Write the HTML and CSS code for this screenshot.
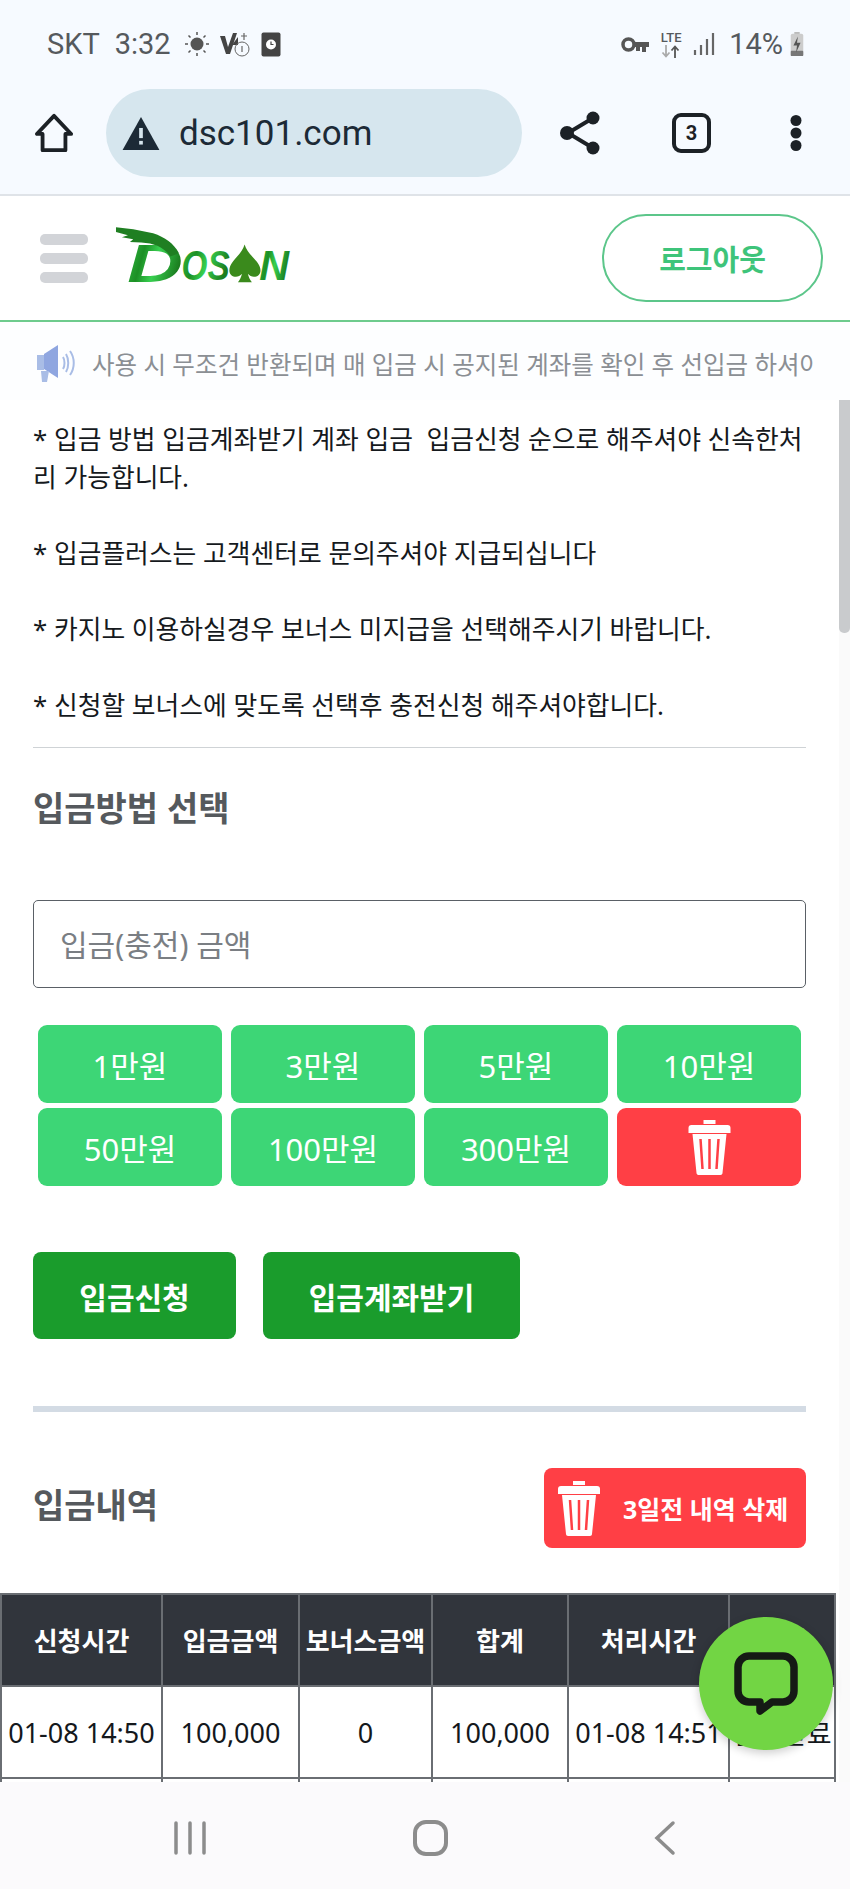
FILE: index.html
```html
<!DOCTYPE html>
<html lang="ko">
<head>
    <meta charset="UTF-8">
    <meta name="viewport" content="width=device-width, initial-scale=1.0">
    <title>dsc101.com</title>
    <link rel="stylesheet" href="styles.css">
</head>
<body>
    <div class="phone">
        <div class="statusbar">
            <div class="status-left">
                <span>SKT</span>
                <span>3:32</span>
                <svg class="sun" width="24" height="24" viewBox="0 0 24 24"><circle cx="12" cy="12" r="6.500" fill="#555"/><g stroke="#555" stroke-width="1.500"><path d="M12 0v3M12 21v3M0 12h3M21 12h3M3.500 3.500l2 2M18.500 18.500l2 2M3.500 20.500l2-2M18.500 5.500l2-2"/></g></svg>
                <svg width="30" height="26" viewBox="0 0 30 26"><path d="M0 5h5l3 11L13 2h4l-7 21H6z" fill="#444"/><path d="M12 14l6-8v8z" fill="#444"/><circle cx="22" cy="18" r="7" fill="none" stroke="#666" stroke-width="1"/><path d="M22 15v6M24 2v7M21 5h6" stroke="#666" stroke-width="1.200"/></svg>
                <svg width="20" height="25" viewBox="0 0 20 25"><rect x="0.500" y="0.500" width="19" height="24" rx="2" fill="#444"/><circle cx="10" cy="12.500" r="5" fill="#fff"/><path d="M10 9.500v3h2.500" fill="none" stroke="#444" stroke-width="1.200"/></svg>
            </div>
            <div class="status-right">
                <svg width="28" height="17" viewBox="0 0 28 17"><circle cx="7.500" cy="8.500" r="5.500" fill="none" stroke="#555" stroke-width="3.500"/><path d="M12 6h16v5h-3v5h-4v-5h-2v4h-4v-4h-3z" fill="#555"/></svg>
                <div class="lte"><span>LTE</span><svg width="22" height="13" viewBox="0 0 22 13"><path d="M6 0v11M2.500 7.500L6 11.500l3.500-4" fill="none" stroke="#aaa" stroke-width="1.800"/><path d="M15 13V2M11.500 5.500L15 1.500l3.500 4" fill="none" stroke="#555" stroke-width="1.800"/></svg></div>
                <svg width="22" height="24" viewBox="0 0 22 24"><path d="M2 18v5M8 13v10M14 7v16M20 1v22" stroke="#666" stroke-width="2.200"/></svg>
                <span class="percent">14%</span>
                <svg class="battery" width="16" height="25" viewBox="0 0 16 28"><rect x="5" y="0" width="6" height="3" fill="#bbb"/><rect x="1" y="2" width="14" height="25" rx="2" fill="#ccc"/><rect x="1" y="21" width="14" height="6" rx="1" fill="#777"/><path d="M9 5l-5 10h4l-1 8 5-11H8z" fill="#555"/></svg>
            </div>
        </div>

        <div class="toolbar">
            <svg width="40" height="40" viewBox="0 0 42 42"><path d="M21 3L3 22h6v17h24V22h6z" fill="none" stroke="#1c2126" stroke-width="4" stroke-linejoin="round"/></svg>
            <div class="urlbar">
                <svg width="40" height="35" viewBox="0 0 40 38"><path d="M20 1L40 37H0z" fill="#1c2a36"/><rect x="18" y="13" width="4" height="11" fill="#d6e6ee"/><rect x="18" y="27" width="4" height="4" fill="#d6e6ee"/></svg>
                <span>dsc101.com</span>
            </div>
            <svg class="share-icon" width="40" height="44" viewBox="0 0 40 44"><path d="M33 7L8 22l25 15" fill="none" stroke="#1c2126" stroke-width="4"/><circle cx="33" cy="7" r="6.500" fill="#1c2126"/><circle cx="7" cy="22" r="7" fill="#1c2126"/><circle cx="33" cy="37" r="6.500" fill="#1c2126"/></svg>
            <div class="tabcount">3</div>
            <svg class="more-icon" width="12" height="36" viewBox="0 0 12 36"><circle cx="6" cy="5.500" r="5.500" fill="#1c2126"/><circle cx="6" cy="18" r="5.500" fill="#1c2126"/><circle cx="6" cy="30.500" r="5.500" fill="#1c2126"/></svg>
        </div>

        <header class="site-header">
            <div class="hamburger"><i></i><i></i><i></i></div>
            <div class="logo">
                <svg class="logo-art" width="177" height="58" viewBox="280 44 530 175">
                    <defs>
                        <linearGradient id="logoGreen" x1="0" y1="0" x2="1" y2="0.300">
                            <stop offset="0" stop-color="#35c445"/>
                            <stop offset="0.35" stop-color="#1c8f25"/>
                            <stop offset="0.6" stop-color="#38d050"/>
                            <stop offset="1" stop-color="#1b7d1f"/>
                        </linearGradient>
                    </defs>
                    <text class="logo-letter" x="318" y="213" font-size="160" textLength="168" lengthAdjust="spacingAndGlyphs" fill="url(#logoGreen)">D</text>
                    <path d="M284 48l52 6 60 12c36 12 62 30 78 60l-26 10c-18-28-50-40-88-42l-34-2 10-8-34-6 18-6-36-10z" fill="#1f7f22"/>
                    <text class="logo-letter" x="482" y="206" font-size="130" textLength="145" lengthAdjust="spacingAndGlyphs" fill="url(#logoGreen)">OS</text>
                    <path d="M672 100c10 34 48 50 48 78 0 20-26 26-38 10 2 10 6 18 12 26h-42c6-8 10-16 12-26-12 16-38 10-38-10 0-28 36-44 46-78z" fill="#3a8a1c"/>
                    <text class="logo-letter" x="716" y="206" font-size="130" textLength="90" lengthAdjust="spacingAndGlyphs" fill="url(#logoGreen)">N</text>
                </svg>
            </div>
            <button class="logout-btn">로그아웃</button>
        </header>

        <div class="notice">
            <svg width="42" height="39" viewBox="0 0 42 39"><path d="M0 11h7v15H0z" fill="#a9bde6"/><path d="M7 10l14-9v33L7 25z" fill="#8fa6e0"/><path d="M4 27h8l-2 11H5z" fill="#a9bde6"/><path d="M26 13c2 3 2 9 0 12M33 7c5 7 5 17 0 24M29 10c3 5 3 13 0 18" fill="none" stroke="#a9bde6" stroke-width="2"/></svg>
            <div class="notice-text"><span>사용 시 무조건 반환되며 매 입금 시 공지된 계좌를 확인 후 선입금 하셔야 합니다</span></div>
        </div>

        <main class="content">
            <div class="guide">
                <p>* 입금 방법 입금계좌받기 계좌 입금&nbsp; 입금신청 순으로 해주셔야 신속한처리 가능합니다.</p>
                <p>* 입금플러스는 고객센터로 문의주셔야 지급되십니다</p>
                <p>* 카지노 이용하실경우 보너스 미지급을 선택해주시기 바랍니다.</p>
                <p>* 신청할 보너스에 맞도록 선택후 충전신청 해주셔야합니다.</p>
            </div>

            <h2 class="section-title">입금방법 선택</h2>

            <input class="amount-input" type="text" placeholder="입금(충전) 금액">

            <div class="amount-grid">
                <button class="amount-btn">1만원</button>
                <button class="amount-btn">3만원</button>
                <button class="amount-btn">5만원</button>
                <button class="amount-btn">10만원</button>
                <button class="amount-btn">50만원</button>
                <button class="amount-btn">100만원</button>
                <button class="amount-btn">300만원</button>
                <button class="amount-btn clear-btn">
                    <svg width="45" height="56" viewBox="0 0 44 56"><path d="M16 1h12v4H16z" fill="#fff"/><path d="M4 6h36c2 0 3 1 3 3v5H1V9c0-2 1-3 3-3z" fill="#fff"/><path d="M5 15h34l-4 39c0 1-1 2-2 2H11c-1 0-2-1-2-2z" fill="#fff"/><path d="M13 20l2 30M22 20v30M31 20l-2 30" stroke="#ff3f45" stroke-width="2.500"/></svg>
                </button>
            </div>

            <div class="action-row">
                <button class="action-btn">입금신청</button>
                <button class="action-btn account-btn">입금계좌받기</button>
            </div>

            <div class="thick-line"></div>

            <div class="history-head">
                <h2 class="history-title">입금내역</h2>
                <button class="delete-old-btn">
                    <svg width="44" height="56" viewBox="0 0 44 56"><path d="M16 1h12v4H16z" fill="#fff"/><path d="M4 6h36c2 0 3 1 3 3v5H1V9c0-2 1-3 3-3z" fill="#fff"/><path d="M5 15h34l-4 39c0 1-1 2-2 2H11c-1 0-2-1-2-2z" fill="#fff"/><path d="M13 20l2 30M22 20v30M31 20l-2 30" stroke="#ff3f45" stroke-width="2.500"/></svg>
                    <span>3일전 내역 삭제</span>
                </button>
            </div>
        </main>

        <div class="table-wrap">
            <table class="history-table">
                <thead>
                    <tr>
                        <th class="col-a">신청시간</th>
                        <th class="col-b">입금금액</th>
                        <th class="col-c">보너스금액</th>
                        <th class="col-d">합계</th>
                        <th class="col-e">처리시간</th>
                        <th>상태</th>
                    </tr>
                </thead>
                <tbody>
                    <tr>
                        <td>01-08 14:50</td>
                        <td>100,000</td>
                        <td>0</td>
                        <td>100,000</td>
                        <td>01-08 14:51</td>
                        <td>입금완료</td>
                    </tr>
                    <tr>
                        <td></td>
                        <td></td>
                        <td></td>
                        <td></td>
                        <td></td>
                        <td></td>
                    </tr>
                </tbody>
            </table>
        </div>

        <div class="scroll-track"><div class="scroll-thumb"></div></div>

        <div class="chat-btn">
            <svg width="64" height="63" viewBox="0 0 64 63"><path d="M15 4h34c6 0 11 5 11 11v24c0 6-5 11-11 11H38L26 59v-9H15C9 50 4 45 4 39V15C4 9 9 4 15 4z" fill="none" stroke="#151a15" stroke-width="7.500" stroke-linejoin="round"/></svg>
        </div>

        <nav class="navbar">
            <svg width="34" height="34" viewBox="0 0 34 34"><path d="M3 2v30M17 2v30M31 2v30" stroke="#8c8c8c" stroke-width="3.500" stroke-linecap="round"/></svg>
            <svg width="35" height="36" viewBox="0 0 35 36"><rect x="2" y="2" width="31" height="32" rx="11" fill="none" stroke="#8c8c8c" stroke-width="4"/></svg>
            <svg width="22" height="36" viewBox="0 0 22 36"><path d="M19 3L3 18l16 15" fill="none" stroke="#8c8c8c" stroke-width="3.500" stroke-linecap="round"/></svg>
        </nav>
    </div>
</body>
</html>
```

FILE: styles.css
```css
* {
    box-sizing: border-box;
}

html, body {
    margin: 0;
    padding: 0;
}

body {
    font-family: "Noto Sans", "Noto Sans CJK KR", sans-serif;
    background: #fff;
}

button {
    font-family: inherit;
    border: none;
    cursor: pointer;
}

.phone {
    width: 850px;
    height: 1889px;
    position: relative;
    overflow: hidden;
    display: flex;
    flex-direction: column;
    background: #fff;
}

.statusbar {
    height: 84px;
    flex: none;
    display: flex;
    justify-content: space-between;
    align-items: center;
    padding: 4px 45px 0 47px;
    background: #f6faff;
    font-family: Roboto, sans-serif;
    font-size: 29px;
    color: #55595d;
}

.status-left, .status-right {
    display: flex;
    align-items: center;
    gap: 11px;
}

.status-left span:first-child {
    margin-right: 4px;
}

.status-left .sun {
    margin-left: 3px;
}

.percent {
    margin-left: 3px;
}

.lte {
    display: flex;
    flex-direction: column;
    align-items: center;
    font-size: 13px;
    line-height: 14px;
    font-weight: 500;
}

.battery {
    margin-left: -5px;
}

.toolbar {
    height: 112px;
    flex: none;
    display: flex;
    align-items: center;
    padding: 0 0 12px 34px;
    background: #f6faff;
    border-bottom: 2px solid #dfe3e8;
}

.urlbar {
    width: 416px;
    height: 88px;
    margin-left: 32px;
    padding-left: 15px;
    border-radius: 44px;
    background: #d6e6ee;
    display: flex;
    align-items: center;
    gap: 18px;
    font-family: Roboto, sans-serif;
    font-size: 35px;
    color: #1c2a36;
}

.share-icon {
    margin-left: 38px;
}

.tabcount {
    width: 39px;
    height: 40px;
    margin-left: 72px;
    border: 4px solid #1c2126;
    border-radius: 9px;
    display: flex;
    align-items: center;
    justify-content: center;
    font-family: Roboto, sans-serif;
    font-size: 20px;
    font-weight: 700;
    color: #1c2126;
}

.more-icon {
    margin-left: 79px;
}

.site-header {
    height: 126px;
    flex: none;
    display: flex;
    align-items: center;
    padding: 0 27px 0 40px;
    border-bottom: 2px solid #6ecb8d;
    background: #fff;
}

.hamburger {
    width: 48px;
    display: flex;
    flex-direction: column;
    gap: 8px;
}

.hamburger i {
    display: block;
    height: 11px;
    border-radius: 5px;
    background: #d2d4d8;
}

.logo {
    margin-left: 26px;
    margin-top: -6px;
    flex: 1;
    display: flex;
}

.logo-art {
    overflow: visible;
}

.logo-letter {
    font-family: "Liberation Sans", sans-serif;
    font-weight: 700;
    font-style: italic;
}

.logout-btn {
    width: 221px;
    height: 88px;
    border: 2px solid #5cc68a;
    border-radius: 44px;
    background: #fff;
    color: #3ec47a;
    font-size: 29px;
    font-weight: 700;
}

.notice {
    height: 78px;
    flex: none;
    display: flex;
    align-items: center;
    padding: 4px 35px 0 37px;
    gap: 13px;
    background: #fdfeff;
}

.notice-text {
    flex: 1;
    overflow: hidden;
    white-space: nowrap;
    font-size: 24.500px;
    color: #8b8f94;
}

.content {
    padding: 20px 44px 0 33px;
    flex: none;
}

.guide {
    border-bottom: 1px solid #cfd3d6;
    padding-bottom: 23px;
}

.guide p {
    margin: 0 0 38px;
    font-size: 25.800px;
    line-height: 38px;
    color: #15191d;
}

.guide p:last-child {
    margin-bottom: 0;
}

.section-title {
    margin: 37px 0 0;
    font-size: 34px;
    line-height: 46px;
    font-weight: 700;
    color: #55595d;
}

.amount-input {
    display: block;
    width: 100%;
    height: 88px;
    margin-top: 69px;
    padding: 0 26px;
    border: 1px solid #5a6066;
    border-radius: 5px;
    font-family: inherit;
    font-size: 30px;
    background: #fff;
}

.amount-input::placeholder {
    color: #7a7e83;
}

.amount-grid {
    display: grid;
    grid-template-columns: repeat(4, 184px);
    grid-auto-rows: 78px;
    gap: 5px 9px;
    margin: 37px 5px 0;
}

.amount-btn {
    background: #3dd676;
    border-radius: 9px;
    color: #fff;
    font-size: 31px;
    padding: 0;
}

.clear-btn {
    background: #ff3f45;
    display: flex;
    align-items: center;
    justify-content: center;
}

.action-row {
    display: flex;
    gap: 27px;
    margin-top: 66px;
}

.action-btn {
    width: 203px;
    height: 87px;
    border-radius: 8px;
    background: #1a9c2c;
    color: #fff;
    font-size: 30px;
    font-weight: 700;
}

.account-btn {
    width: 257px;
}

.thick-line {
    height: 6px;
    margin-top: 67px;
    background: #d3dbe4;
}

.history-head {
    display: flex;
    align-items: center;
    justify-content: space-between;
    margin-top: 56px;
}

.history-title {
    margin: 0 0 10px;
    font-size: 34px;
    font-weight: 700;
    color: #55595d;
}

.delete-old-btn {
    width: 262px;
    height: 80px;
    border-radius: 8px;
    background: #ff3f45;
    color: #fff;
    font-size: 25px;
    font-weight: 700;
    display: flex;
    align-items: center;
    gap: 22px;
    padding: 0 0 0 13px;
    white-space: nowrap;
}

.table-wrap {
    margin-top: 45px;
    width: 836px;
    flex: none;
}

.history-table {
    width: 100%;
    border-collapse: collapse;
    table-layout: fixed;
    font-size: 27px;
}

.history-table th, .history-table td {
    border: 2px solid #6a6e73;
    text-align: center;
    padding: 0;
    white-space: nowrap;
}

.history-table th {
    height: 92px;
    background: #31353c;
    color: #fff;
    font-weight: 700;
    font-size: 26px;
}

.history-table td {
    height: 92px;
    color: #14181c;
}

.col-a { width: 161px; }
.col-b { width: 137px; }
.col-c { width: 133px; }
.col-d { width: 136px; }
.col-e { width: 161px; }

.scroll-track {
    position: absolute;
    top: 400px;
    right: 0;
    bottom: 0;
    width: 11px;
    background: #fafafa;
}

.scroll-thumb {
    height: 233px;
    border-radius: 0 0 5px 5px;
    background: #c9cbcd;
}

.chat-btn {
    position: absolute;
    left: 699px;
    top: 1617px;
    width: 134px;
    height: 133px;
    border-radius: 50%;
    background: #72d544;
    display: flex;
    align-items: center;
    justify-content: center;
    box-shadow: 0 3px 10px rgba(0, 0, 0, 0.2);
}

.navbar {
    position: absolute;
    left: 0;
    right: 0;
    bottom: 0;
    height: 107px;
    display: flex;
    align-items: center;
    background: #fbfafc;
    padding: 5px 174px 0 173px;
    justify-content: space-between;
}
```
